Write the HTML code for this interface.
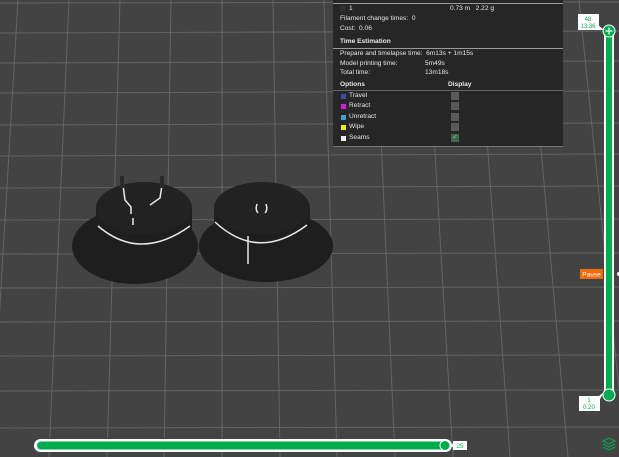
<!DOCTYPE html>
<html><head><meta charset="utf-8"><style>
html,body{margin:0;padding:0}
body{width:619px;height:457px;overflow:hidden;background:#434343;position:relative;font-family:"Liberation Sans",sans-serif}
svg{position:absolute;left:0;top:0}
.panel{position:absolute;left:333px;top:0;width:230px;height:147px;background:#262626;color:#e6e6e6;font-size:6.6px}
.panel div{position:absolute;white-space:nowrap}
.hr{position:absolute;left:0;width:230px;height:1px;background:#9a9a9a}
.sq{position:absolute;width:5px;height:5px}
.cb{position:absolute;left:118px;width:8px;height:8px;background:#5a5a5a}
.b{font-weight:bold}
</style></head><body>
<svg width="619" height="457" viewBox="0 0 619 457">
<g stroke="#646464" stroke-width="1" fill="none">
<line x1="-33" y1="0" x2="-66" y2="457"/>
<line x1="18" y1="0" x2="-9" y2="457"/>
<line x1="69" y1="0" x2="49" y2="457"/>
<line x1="120" y1="0" x2="107" y2="457"/>
<line x1="171" y1="0" x2="164" y2="457"/>
<line x1="222" y1="0" x2="222" y2="457"/>
<line x1="273" y1="0" x2="280" y2="457"/>
<line x1="324" y1="0" x2="337" y2="457"/>
<line x1="375" y1="0" x2="395" y2="457"/>
<line x1="426" y1="0" x2="453" y2="457"/>
<line x1="477" y1="0" x2="510" y2="457"/>
<line x1="528" y1="0" x2="568" y2="457"/>
<line x1="579" y1="0" x2="626" y2="457"/>
<line x1="0" y1="3" x2="619" y2="2"/>
<line x1="0" y1="33" x2="619" y2="31"/>
<line x1="0" y1="63" x2="619" y2="61"/>
<line x1="0" y1="93" x2="619" y2="91"/>
<line x1="0" y1="125" x2="619" y2="123"/>
<line x1="0" y1="156" x2="619" y2="154"/>
<line x1="0" y1="188" x2="619" y2="186"/>
<line x1="0" y1="220" x2="619" y2="219"/>
<line x1="0" y1="254" x2="619" y2="253"/>
<line x1="0" y1="288" x2="619" y2="287"/>
<line x1="0" y1="322" x2="619" y2="321"/>
<line x1="0" y1="356" x2="619" y2="355"/>
<line x1="0" y1="391" x2="619" y2="390"/>
<line x1="0" y1="428" x2="619" y2="427"/>
</g>
<g fill="#1e1e1e">
<ellipse cx="135" cy="246" rx="63" ry="38"/>
<ellipse cx="266" cy="246" rx="67" ry="36"/>
<ellipse cx="144" cy="228" rx="48" ry="26"/>
<rect x="96" y="208" width="96" height="20"/>
<ellipse cx="144" cy="208" rx="48" ry="26" fill="#222"/>
<ellipse cx="262" cy="228" rx="48" ry="26"/>
<rect x="214" y="208" width="96" height="20"/>
<ellipse cx="262" cy="208" rx="48" ry="26" fill="#222"/>
</g>
<g stroke="#e8e8e8" stroke-width="1.5" fill="none">
<path d="M98 226 Q140 262 190 226"/>
<path d="M215 222 Q258 262 307 225"/>
<line x1="248" y1="236" x2="248" y2="264"/>
<path d="M123 185 L125 200 L131 207 L131 214"/>
<path d="M162 185 L160 198 L150 205"/>
<line x1="133" y1="218" x2="133" y2="225"/>
<path d="M257 204 Q255 210 258 213"/>
<path d="M266 204 Q268 210 265 213"/>
</g>
<rect x="120" y="176" width="4" height="12" fill="#2a2a2a"/>
<rect x="160" y="176" width="4" height="12" fill="#2a2a2a"/>
<rect x="604" y="28" width="10" height="370" rx="5" fill="#fff"/>
<rect x="606" y="30" width="6" height="366" fill="#00ad4e"/>
<circle cx="609" cy="31" r="6" fill="#00ad4e" stroke="#fff" stroke-width="1"/>
<path d="M609 27.5v7M605.5 31h7" stroke="#fff" stroke-width="1.2"/>
<circle cx="609" cy="395" r="6" fill="#00ad4e" stroke="#fff" stroke-width="1"/>
<rect x="34" y="439" width="418" height="13" rx="6.5" fill="#fff"/>
<rect x="37" y="441.5" width="410" height="8" rx="4" fill="#00ad4e"/>
<circle cx="445" cy="445.5" r="5" fill="#00ad4e" stroke="#fff" stroke-width="1"/>
<path d="M450 445.5 L454 443 L454 448Z" fill="#fff"/>
<rect x="453" y="441" width="14" height="9" fill="#fff"/>
<text x="460" y="448" font-size="6.5" fill="#00ad4e" text-anchor="middle" font-family="Liberation Sans">25</text>
<rect x="578" y="14" width="21" height="16" fill="#fff"/>
<path d="M598 25 L604 30 L598 30Z" fill="#fff"/>
<text x="588" y="21" font-size="6" fill="#00ad4e" text-anchor="middle" font-family="Liberation Sans">48</text>
<text x="588" y="28" font-size="6" fill="#00ad4e" text-anchor="middle" font-family="Liberation Sans">13.36</text>
<rect x="579" y="396" width="21" height="15" fill="#fff"/>
<path d="M599 396 L604 392 L599 401Z" fill="#fff"/>
<text x="589" y="402" font-size="6" fill="#00ad4e" text-anchor="middle" font-family="Liberation Sans">1</text>
<text x="589" y="409" font-size="6" fill="#00ad4e" text-anchor="middle" font-family="Liberation Sans">0.20</text>
<rect x="580" y="269" width="23" height="10" fill="#f26a0a"/>
<text x="591.5" y="276.5" font-size="6.5" fill="#fff" text-anchor="middle" font-family="Liberation Sans">Pause</text>
<circle cx="619" cy="274" r="2" fill="#fff"/>
<g fill="none" stroke="#00ad4e" stroke-width="1">
<path d="M603 441 L609 438 L615 441 L609 444Z"/>
<path d="M603 444 L609 447 L615 444"/>
<path d="M603 447 L609 450 L615 447"/>
</g>
</svg>
<div class="panel">
<div class="hr" style="top:3px"></div>
<div class="sq" style="left:7px;top:6px;background:#333"></div>
<div style="left:16px;top:5px">1</div>
<div style="left:117px;top:5px">0.73 m&nbsp;&nbsp;&nbsp;2.22 g</div>
<div style="left:7px;top:15px">Filament change times:&nbsp;&nbsp;0</div>
<div style="left:7px;top:25px">Cost:&nbsp;&nbsp;0.06</div>
<div class="b" style="left:7px;top:38px">Time Estimation</div>
<div class="hr" style="top:48px"></div>
<div style="left:7px;top:50px">Prepare and timelapse time:&nbsp;&nbsp;6m13s + 1m15s</div>
<div style="left:7px;top:60px">Model printing time:</div>
<div style="left:92px;top:60px">5m49s</div>
<div style="left:7px;top:69px">Total time:</div>
<div style="left:92px;top:69px">13m18s</div>
<div class="b" style="left:7px;top:81px">Options</div>
<div class="b" style="left:115px;top:81px">Display</div>
<div class="hr" style="top:90px;background:#666"></div>
<div class="sq" style="left:8px;top:94px;background:#3b4ea8"></div><div style="left:16px;top:92px">Travel</div><div class="cb" style="top:92px"></div>
<div class="sq" style="left:8px;top:104px;background:#d21fd2"></div><div style="left:16px;top:102px">Retract</div><div class="cb" style="top:102px"></div>
<div class="sq" style="left:8px;top:115px;background:#3aa0d0"></div><div style="left:16px;top:113px">Unretract</div><div class="cb" style="top:113px"></div>
<div class="sq" style="left:8px;top:125px;background:#f0f000"></div><div style="left:16px;top:123px">Wipe</div><div class="cb" style="top:123px"></div>
<div class="sq" style="left:8px;top:136px;background:#eee"></div><div style="left:16px;top:134px">Seams</div><div class="cb" style="top:134px;background:#3e6b4e;color:#7fd09a;font-size:7px;line-height:8px;text-align:center">✓</div>
<div class="hr" style="top:146px;background:#777"></div>
</div>
</body></html>
